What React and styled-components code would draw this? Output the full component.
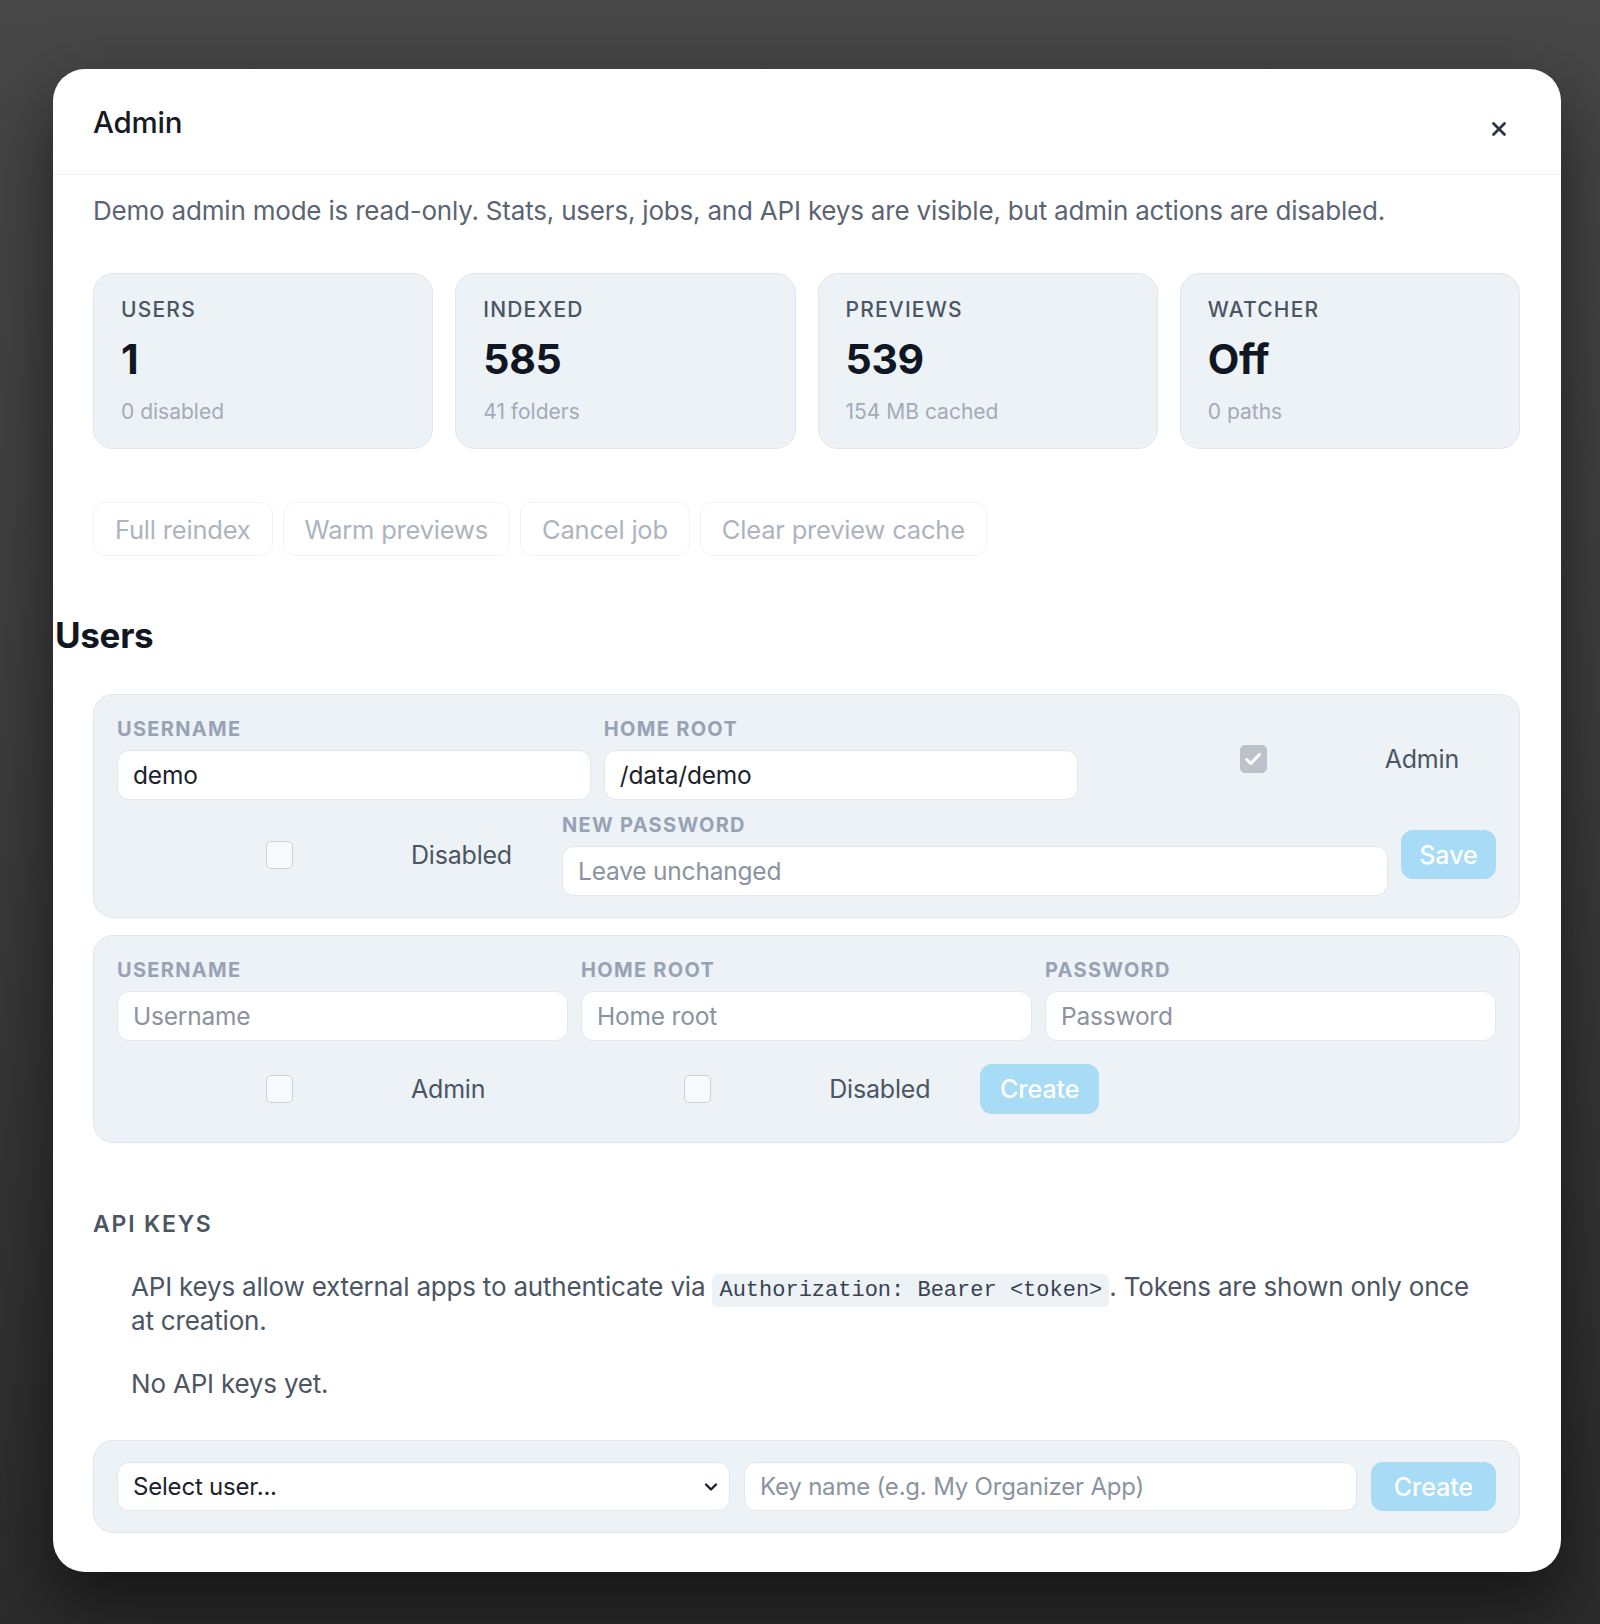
import React from "react";
import styled, { createGlobalStyle } from "styled-components";

const GlobalStyle = createGlobalStyle`
  * { box-sizing: border-box; }
  html, body { margin: 0; padding: 0; }
  body {
    font-family: Inter, "Noto Sans", "Liberation Sans", sans-serif;
    background: #2e2e2e;
  }
`;

const Page = styled.div`
  min-height: 1624px;
  padding: 69px 39px 53px 53px;
  background: linear-gradient(180deg, #474747 0%, #3d3d3d 45%, #2b2b2b 100%);
`;

const Modal = styled.div`
  background: #ffffff;
  border-radius: 32px;
  box-shadow: 0 30px 70px rgba(0, 0, 0, 0.55);
  overflow: hidden;
`;

const Header = styled.div`
  height: 106px;
  padding: 0 53px 0 40px;
  display: flex;
  align-items: center;
  justify-content: space-between;
  border-bottom: 1px solid #eef0f3;
`;

const Title = styled.h1`
  margin: 0;
  font-size: 29.5px;
  font-weight: 500;
  color: #151a24;
  letter-spacing: -0.2px;
`;

const CloseButton = styled.button`
  border: none;
  background: none;
  padding: 0;
  margin-top: 14px;
  width: 18px;
  height: 18px;
  display: flex;
  align-items: center;
  justify-content: center;
  color: #2d3440;
`;

const Body = styled.div`
  padding: 18px 41px 39px 40px;
`;

const Intro = styled.p`
  margin: 0;
  font-size: 26px;
  line-height: 36px;
  color: #5b6472;
  letter-spacing: -0.2px;
`;

const StatGrid = styled.div`
  margin-top: 44px;
  display: grid;
  grid-template-columns: repeat(4, 1fr);
  gap: 22px;
`;

const StatCard = styled.div`
  height: 176px;
  padding: 24px 27px 0;
  background: #edf2f7;
  border: 1px solid #e1e6ec;
  border-radius: 20px;
  display: flex;
  flex-direction: column;
`;

const StatLabel = styled.div`
  font-size: 21px;
  line-height: 24px;
  font-weight: 500;
  letter-spacing: 1.2px;
  color: #4b5563;
`;

const StatValue = styled.div`
  margin-top: 13px;
  font-size: 41px;
  line-height: 48px;
  font-weight: 700;
  color: #111722;
  letter-spacing: -0.3px;
`;

const StatSub = styled.div`
  margin-top: 17px;
  font-size: 21px;
  line-height: 24px;
  color: #a3abb6;
`;

const Actions = styled.div`
  margin-top: 53px;
  display: flex;
  gap: 10px;
`;

const GhostButton = styled.button`
  height: 54px;
  padding: 0 21px;
  font-family: inherit;
  font-size: 25.5px;
  color: #adb4bd;
  background: #ffffff;
  border: 1px solid #f1f3f5;
  border-radius: 12px;
  letter-spacing: -0.2px;
`;

const SectionTitle = styled.h2`
  margin: 59px 0 0 -38px;
  font-size: 35px;
  line-height: 40px;
  font-weight: 700;
  color: #111722;
  letter-spacing: -0.3px;
`;

const FormCard = styled.div`
  margin-top: ${(p) => p.$gap || 17}px;
  padding: 22px 23px ${(p) => p.$bottom || 21}px;
  background: #edf2f7;
  border: 1px solid #e1e6ec;
  border-radius: 20px;
`;

const Row = styled.div`
  display: flex;
  align-items: center;
  gap: 13px;
  margin-top: ${(p) => p.$space || 0}px;
`;

const ThreeCols = styled.div`
  display: grid;
  grid-template-columns: repeat(3, 1fr);
  gap: 13px;
`;

const Field = styled.label`
  flex: 1 1 0;
  min-width: 0;
  display: flex;
  flex-direction: column;
  gap: 9px;
`;

const FieldLabel = styled.span`
  font-size: 20px;
  line-height: 24px;
  font-weight: 700;
  letter-spacing: 1.3px;
  color: #97a3b4;
`;

const TextInput = styled.input`
  width: 100%;
  min-width: 0;
  height: 50px;
  padding: 0 15px;
  font-family: inherit;
  font-size: 24.5px;
  color: #1c222c;
  background: #ffffff;
  border: 1px solid #e2e7ee;
  border-radius: 12px;
  outline: none;
  letter-spacing: -0.2px;

  &::placeholder {
    color: #8a939f;
  }
`;

const CheckItem = styled.label`
  flex: none;
  display: flex;
  align-items: center;
  padding: 0 37px 0 149px;
`;

const CheckBox = styled.span`
  width: 27px;
  height: 28px;
  flex: none;
  margin-right: 118px;
  border-radius: 5px;
  display: flex;
  align-items: center;
  justify-content: center;
  background: ${(p) => (p.$checked ? "#bcc2ca" : "#f7f9fb")};
  border: 1px solid ${(p) => (p.$checked ? "#bcc2ca" : "#cad1da")};
`;

const CheckText = styled.span`
  font-size: 25px;
  color: #4b5563;
  letter-spacing: -0.2px;
`;

const PrimaryButton = styled.button`
  flex: none;
  width: ${(p) => p.$width}px;
  height: ${(p) => p.$height || 50}px;
  font-family: inherit;
  font-size: 25px;
  font-weight: 500;
  color: #ffffff;
  background: #a7dbf6;
  border: none;
  border-radius: 12px;
`;

const SubHeading = styled.h3`
  margin: 67px 0 0;
  font-size: 23px;
  line-height: 28px;
  font-weight: 600;
  letter-spacing: 1.8px;
  color: #4b5563;
`;

const Prose = styled.p`
  margin: ${(p) => p.$top}px 0 0;
  padding: 0 38px;
  font-size: 26px;
  line-height: 34px;
  color: #4b5563;
  letter-spacing: -0.2px;
`;

const Code = styled.code`
  font-family: "Liberation Mono", "DejaVu Sans Mono", monospace;
  font-size: 22px;
  line-height: 20px;
  letter-spacing: 0;
  color: #3a4250;
  background: #edf2f7;
  padding: 4px 7px;
  border-radius: 6px;
`;

const KeyCard = styled.div`
  margin-top: 39px;
  padding: 21px 23px;
  background: #edf2f7;
  border: 1px solid #e1e6ec;
  border-radius: 20px;
  display: grid;
  grid-template-columns: 1fr 1fr 125px;
  align-items: center;
  gap: 14px;
`;

const SelectWrap = styled.div`
  min-width: 0;
  position: relative;
`;

const Select = styled.select`
  width: 100%;
  height: 49px;
  padding: 0 40px 0 15px;
  appearance: none;
  font-family: inherit;
  font-size: 24px;
  color: #1c222c;
  background: #ffffff;
  border: 1px solid #e2e7ee;
  border-radius: 12px;
  letter-spacing: -0.2px;
`;

const Chevron = styled.svg`
  position: absolute;
  right: 12px;
  top: 50%;
  transform: translateY(-50%);
  pointer-events: none;
`;

const KeyInput = styled(TextInput)`
  height: 49px;
  font-size: 24px;
`;

const stats = [
  { label: "USERS", value: "1", sub: "0 disabled" },
  { label: "INDEXED", value: "585", sub: "41 folders" },
  { label: "PREVIEWS", value: "539", sub: "154 MB cached" },
  { label: "WATCHER", value: "Off", sub: "0 paths" },
];

const jobs = ["Full reindex", "Warm previews", "Cancel job", "Clear preview cache"];

const Check = ({ checked, children }) => (
  <CheckItem>
    <CheckBox $checked={checked}>
      {checked && (
        <svg width="22" height="22" viewBox="0 0 24 24" fill="none" stroke="#fff" strokeWidth="3.2" strokeLinecap="round" strokeLinejoin="round">
          <path d="M5 12.5l4.5 4.5L19 7" />
        </svg>
      )}
    </CheckBox>
    <CheckText>{children}</CheckText>
  </CheckItem>
);

export default function App() {
  return (
    <>
      <GlobalStyle />
      <Page>
        <Modal>
          <Header>
            <Title>Admin</Title>
            <CloseButton aria-label="Close">
              <svg width="16" height="16" viewBox="0 0 16 16" fill="none" stroke="currentColor" strokeWidth="2.8" strokeLinecap="round">
                <path d="M2.5 2.5l11 11M13.5 2.5l-11 11" />
              </svg>
            </CloseButton>
          </Header>

          <Body>
            <Intro>
              Demo admin mode is read-only. Stats, users, jobs, and API keys are visible, but admin actions are disabled.
            </Intro>

            <StatGrid>
              {stats.map((s) => (
                <StatCard key={s.label}>
                  <StatLabel>{s.label}</StatLabel>
                  <StatValue>{s.value}</StatValue>
                  <StatSub>{s.sub}</StatSub>
                </StatCard>
              ))}
            </StatGrid>

            <Actions>
              {jobs.map((j) => (
                <GhostButton key={j} disabled>
                  {j}
                </GhostButton>
              ))}
            </Actions>

            <SectionTitle>Users</SectionTitle>

            <FormCard $gap={39}>
              <Row>
                <Field>
                  <FieldLabel>USERNAME</FieldLabel>
                  <TextInput defaultValue="demo" />
                </Field>
                <Field>
                  <FieldLabel>HOME ROOT</FieldLabel>
                  <TextInput defaultValue="/data/demo" />
                </Field>
                <Check checked>Admin</Check>
              </Row>
              <Row $space={13}>
                <Check>Disabled</Check>
                <Field>
                  <FieldLabel>NEW PASSWORD</FieldLabel>
                  <TextInput placeholder="Leave unchanged" />
                </Field>
                <PrimaryButton $width={95} $height={49} disabled>
                  Save
                </PrimaryButton>
              </Row>
            </FormCard>

            <FormCard $bottom={28}>
              <ThreeCols>
                <Field>
                  <FieldLabel>USERNAME</FieldLabel>
                  <TextInput placeholder="Username" />
                </Field>
                <Field>
                  <FieldLabel>HOME ROOT</FieldLabel>
                  <TextInput placeholder="Home root" />
                </Field>
                <Field>
                  <FieldLabel>PASSWORD</FieldLabel>
                  <TextInput placeholder="Password" type="password" />
                </Field>
              </ThreeCols>
              <Row $space={23}>
                <Check>Admin</Check>
                <Check>Disabled</Check>
                <PrimaryButton $width={119} disabled>
                  Create
                </PrimaryButton>
              </Row>
            </FormCard>

            <SubHeading>API KEYS</SubHeading>
            <Prose $top={32}>
              API keys allow external apps to authenticate via <Code>Authorization: Bearer &lt;token&gt;</Code>. Tokens are shown only once at creation.
            </Prose>
            <Prose $top={29}>No API keys yet.</Prose>

            <KeyCard>
              <SelectWrap>
                <Select defaultValue="">
                  <option value="">Select user...</option>
                  <option value="demo">demo</option>
                </Select>
                <Chevron width="14" height="9" viewBox="0 0 14 9" fill="none" stroke="#1c222c" strokeWidth="2.4" strokeLinecap="round" strokeLinejoin="round">
                  <path d="M2 2l5 5 5-5" />
                </Chevron>
              </SelectWrap>
              <KeyInput placeholder="Key name (e.g. My Organizer App)" />
              <PrimaryButton $width={125} $height={49} disabled>
                Create
              </PrimaryButton>
            </KeyCard>
          </Body>
        </Modal>
      </Page>
    </>
  );
}
